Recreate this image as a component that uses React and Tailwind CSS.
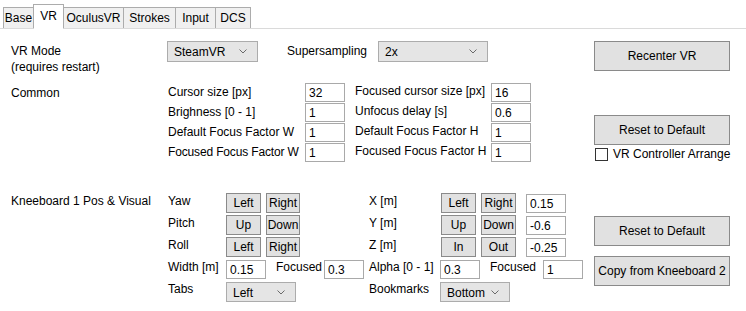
import React from "react";

const font = { fontFamily: '"Liberation Sans", Arial, sans-serif' };

function Chevron() {
  return (
    <svg width="8" height="5" viewBox="0 0 8 5" className="shrink-0">
      <path d="M0.5 0.5 L4 4 L7.5 0.5" fill="none" stroke="#6a6a6a" strokeWidth="1" />
    </svg>
  );
}

function Select({ value, w, h = "h-[21px]" }) {
  return (
    <div className={`${w} ${h} flex items-center justify-between bg-[#e5e5e5] border border-[#acacac] pl-[6px] pr-[10px] shrink-0`}>
      <span className="pt-[2px]">{value}</span>
      <Chevron />
    </div>
  );
}

function Input({ value, w = "w-[40px]" }) {
  return (
    <div className={`${w} h-[19px] bg-white border border-[#a9a9a9] pl-[3px] pt-[2px] leading-[15px] shrink-0`}>
      {value}
    </div>
  );
}

function Btn({ children, w, h = "h-[20px]" }) {
  return (
    <div className={`${w} ${h} flex items-center justify-center bg-[#e1e1e1] border border-[#8a8a8a] shrink-0 pt-[1px] whitespace-nowrap`}>
      {children}
    </div>
  );
}

function Tab({ label, w, active }) {
  if (active) {
    return (
      <div className={`${w} h-[25px] -ml-px bg-white border border-[#acacac] border-b-white relative z-10 -mb-px flex items-start justify-center pt-[4px]`}>
        {label}
      </div>
    );
  }
  return (
    <div className={`${w} h-[21px] -ml-px bg-[#f0f0f0] border border-[#acacac] border-b-0 flex items-start justify-center pt-[3px]`}>
      {label}
    </div>
  );
}

export default function App() {
  return (
    <div className="w-[746px] h-[311px] bg-white text-[12px] leading-[15px] text-black overflow-hidden whitespace-nowrap" style={font}>
      {/* Tabs */}
      <div className="h-[29px] flex items-end pl-[4px] border-b border-[#dadada]">
        <Tab label="Base" w="w-[31px]" />
        <Tab label="VR" w="w-[31px]" active />
        <Tab label="OculusVR" w="w-[61px]" />
        <Tab label="Strokes" w="w-[53px]" />
        <Tab label="Input" w="w-[41px]" />
        <Tab label="DCS" w="w-[36px]" />
      </div>

      {/* Section 1 */}
      <div className="flex pl-[11px] pt-[12px]">
        <div className="w-[583px] flex flex-col">
          <div className="flex h-[42px]">
            <div className="w-[156px] pt-[2px] leading-[16px]">
              VR Mode
              <br />
              (requires restart)
            </div>
            <Select value="SteamVR" w="w-[91px]" />
            <div className="w-[120px] pl-[29px] pt-[3px]">Supersampling</div>
            <Select value="2x" w="w-[110px]" />
          </div>
          <div className="flex">
            <div className="w-[157px] pt-[3px]">Common</div>
            <div className="grid grid-cols-[137px_50px_136px_40px] gap-y-[1px]">
              <div className="pt-[2px]">Cursor size [px]</div>
              <Input value="32" />
              <div className="pt-[1px]">Focused cursor size [px]</div>
              <Input value="16" />
              <div className="pt-[2px]">Brighness [0 - 1]</div>
              <Input value="1" />
              <div className="pt-[1px]">Unfocus delay [s]</div>
              <Input value="0.6" />
              <div className="pt-[2px]">Default Focus Factor W</div>
              <Input value="1" />
              <div className="pt-[1px]">Default Focus Factor H</div>
              <Input value="1" />
              <div className="pt-[2px] tracking-[-0.15px]">Focused Focus Factor W</div>
              <Input value="1" />
              <div className="pt-[1px]">Focused Focus Factor H</div>
              <Input value="1" />
            </div>
          </div>
        </div>
        <div className="w-[136px] flex flex-col">
          <Btn w="w-[136px]" h="h-[30px]">Recenter VR</Btn>
          <div className="h-[44px]" />
          <Btn w="w-[136px]" h="h-[30px]">Reset to Default</Btn>
          <div className="flex items-center mt-[1px] h-[16px]">
            <div className="w-[13px] h-[13px] border border-[#333] bg-white ml-[1px] shrink-0" />
            <span className="ml-[5px]">VR Controller Arrange</span>
          </div>
        </div>
      </div>

      {/* Section 2 */}
      <div className="flex pl-[11px] mt-[31px]">
        <div className="w-[583px] flex">
          <div className="w-[157px] pt-[1px]">Kneeboard 1 Pos &amp; Visual</div>
          <div className="flex flex-col">
            {[
              ["Yaw", "Left", "Right", "X [m]", "Left", "Right", "0.15"],
              ["Pitch", "Up", "Down", "Y [m]", "Up", "Down", "-0.6"],
              ["Roll", "Left", "Right", "Z [m]", "In", "Out", "-0.25"],
            ].map((r, i) => (
              <div key={i} className="flex h-[22px] items-start">
                <div className="w-[58px] pt-[1px]">{r[0]}</div>
                <Btn w="w-[35px]">{r[1]}</Btn>
                <div className="w-[5px]" />
                <Btn w="w-[34px]">{r[2]}</Btn>
                <div className="w-[69px]" />
                <div className="w-[72px] pt-[1px]">{r[3]}</div>
                <Btn w="w-[35px]">{r[4]}</Btn>
                <div className="w-[5px]" />
                <Btn w="w-[35px]">{r[5]}</Btn>
                <div className="w-[10px]" />
                <div className="pt-[1px]">
                  <Input value={r[6]} />
                </div>
              </div>
            ))}
            <div className="flex h-[22px] items-start pt-[1px]">
              <div className="w-[58px]">Width [m]</div>
              <Input value="0.15" />
              <div className="w-[58px] pl-[10px]">Focused</div>
              <Input value="0.3" />
              <div className="w-[5px]" />
              <div className="w-[71px]">Alpha [0 - 1]</div>
              <Input value="0.3" />
              <div className="w-[63px] pl-[10px]">Focused</div>
              <Input value="1" />
            </div>
            <div className="flex h-[22px] items-start pt-[1px]">
              <div className="w-[58px]">Tabs</div>
              <Select value="Left" w="w-[70px]" h="h-[20px]" />
              <div className="w-[73px]" />
              <div className="w-[71px]">Bookmarks</div>
              <Select value="Bottom" w="w-[70px]" h="h-[20px]" />
            </div>
          </div>
        </div>
        <div className="w-[136px] flex flex-col pt-[23px]">
          <Btn w="w-[136px]" h="h-[30px]">Reset to Default</Btn>
          <div className="h-[10px]" />
          <Btn w="w-[136px]" h="h-[30px]">Copy from Kneeboard 2</Btn>
        </div>
      </div>
    </div>
  );
}
